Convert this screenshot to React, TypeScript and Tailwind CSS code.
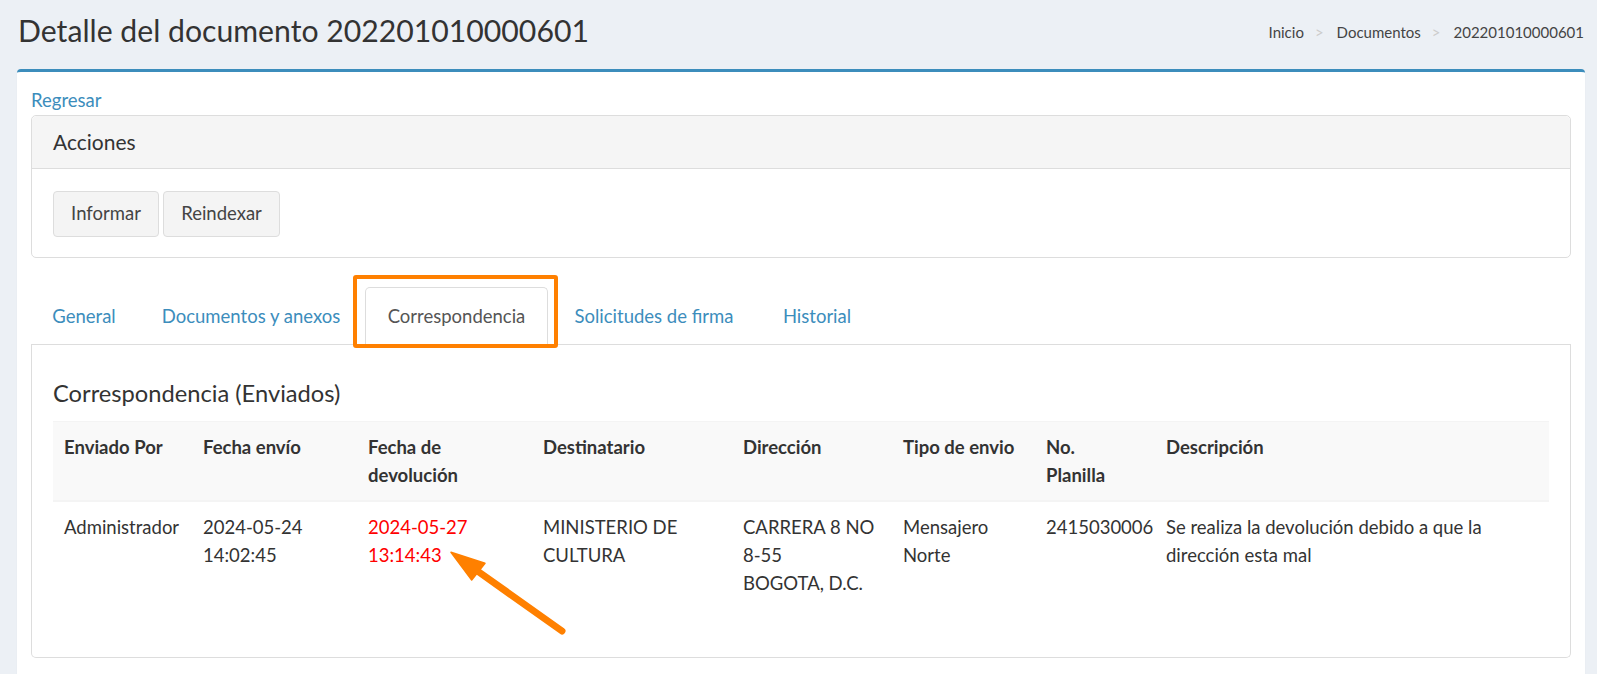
import React from "react";

const font = { fontFamily: "Lato, 'Noto Sans', sans-serif" };

export default function App() {
  const tabs = [
    { label: "General", w: "w-[106px]" },
    { label: "Documentos y anexos", w: "w-[222px]" },
    { label: "Correspondencia", w: "w-[183px]", active: true },
    { label: "Solicitudes de firma", w: "w-[206px]" },
    { label: "Historial", w: "w-[114px]" },
  ];
  return (
    <div className="relative min-h-[674px] bg-[#ecf0f5] text-[#333]" style={font}>
      {/* Header */}
      <div className="flex h-[69px] items-start justify-between pl-[18px] pr-[13px]">
        <h1 className="pt-[12px] text-[30.2px] font-normal leading-[37px] text-[#333]">
          Detalle del documento 202201010000601
        </h1>
        <div className="mt-[21px] flex text-[15px] leading-[23px] text-[#444]">
          <span>Inicio</span>
          <span className="ml-[11px] mr-[13px] text-[#ccc]">&gt;</span>
          <span>Documentos</span>
          <span className="ml-[11px] mr-[13px] text-[#ccc]">&gt;</span>
          <span>202201010000601</span>
        </div>
      </div>

      {/* Card */}
      <div className="ml-[17px] mr-[12px] rounded-[4px] border-t-[3px] border-[#3c8dbc] bg-white p-[14px] pb-[20px] shadow-[0_1px_1px_rgba(0,0,0,0.1)]">
        <a className="block text-[18.5px] leading-[28px] text-[#3c8dbc]">Regresar</a>

        {/* Acciones panel */}
        <div className="mb-[29px] mt-[1px] rounded-[5px] border border-[#ddd]">
          <div className="h-[53px] rounded-t-[5px] border-b border-[#ddd] bg-[#f5f5f5] px-[21px] text-[21px] leading-[52px] text-[#333]">
            Acciones
          </div>
          <div className="flex gap-[4px] px-[21px] pb-[20px] pt-[22px]">
            <button className="h-[46px] w-[106px] rounded-[4px] border border-[#ddd] bg-[#f4f4f4] text-[18.5px] text-[#444]">
              Informar
            </button>
            <button className="h-[46px] w-[117px] rounded-[4px] border border-[#ddd] bg-[#f4f4f4] text-[18.5px] text-[#444]">
              Reindexar
            </button>
          </div>
        </div>

        {/* Tabs */}
        <ul className="flex gap-[3px] border-b border-[#ddd]">
          {tabs.map((t) => (
            <li
              key={t.label}
              className={
                t.active
                  ? `relative -mb-px ${t.w} rounded-t-[5px] border border-[#ddd] border-b-white bg-white pb-[14px] pt-[14px] text-center text-[18.5px] leading-[28px] text-[#555]`
                  : `relative -mb-px ${t.w} border border-transparent pb-[14px] pt-[14px] text-center text-[18.5px] leading-[28px] text-[#3c8dbc]`
              }
            >
              {t.label}
              {t.active && (
                <span className="pointer-events-none absolute -bottom-[4px] -left-[13px] -right-[11px] -top-[13px] rounded-[3px] border-[4px] border-[#ff8000]" />
              )}
            </li>
          ))}
        </ul>

        {/* Tab content */}
        <div className="rounded-b-[5px] border-x border-b border-[#ddd] px-[21px] pb-[21px] pt-[34px]">
          <h4 className="mb-[14px] text-[23.7px] font-normal leading-[28px] text-[#333]">
            Correspondencia (Enviados)
          </h4>
          <table className="mb-[28px] w-full table-fixed border-collapse text-left text-[18.5px] leading-[28px]">
            <colgroup>
              <col className="w-[139px]" />
              <col className="w-[165px]" />
              <col className="w-[175px]" />
              <col className="w-[200px]" />
              <col className="w-[160px]" />
              <col className="w-[143px]" />
              <col className="w-[120px]" />
              <col />
            </colgroup>
            <thead>
              <tr className="border-b-2 border-t border-[#f4f4f4] bg-[#f9f9f9]">
                <th className="px-[11px] pb-[11px] pt-[11px] align-top font-bold">Enviado Por</th>
                <th className="px-[11px] pb-[11px] pt-[11px] align-top font-bold">Fecha envío</th>
                <th className="px-[11px] pb-[11px] pt-[11px] align-top font-bold">
                  Fecha de<br />devolución
                </th>
                <th className="px-[11px] pb-[11px] pt-[11px] align-top font-bold">Destinatario</th>
                <th className="px-[11px] pb-[11px] pt-[11px] align-top font-bold">Dirección</th>
                <th className="px-[11px] pb-[11px] pt-[11px] align-top font-bold">Tipo de envio</th>
                <th className="px-[11px] pb-[11px] pt-[11px] align-top font-bold">
                  No.<br />Planilla
                </th>
                <th className="px-[11px] pb-[11px] pt-[11px] align-top font-bold">Descripción</th>
              </tr>
            </thead>
            <tbody>
              <tr>
                <td className="px-[11px] py-[11px] align-top">Administrador</td>
                <td className="px-[11px] py-[11px] align-top">
                  2024-05-24<br />14:02:45
                </td>
                <td className="px-[11px] py-[11px] align-top text-[#ff0000]">
                  2024-05-27<br />13:14:43
                </td>
                <td className="px-[11px] py-[11px] align-top">
                  MINISTERIO DE<br />CULTURA
                </td>
                <td className="px-[11px] py-[11px] align-top">
                  CARRERA 8 NO<br />8-55<br />BOGOTA, D.C.
                </td>
                <td className="px-[11px] py-[11px] align-top">
                  Mensajero<br />Norte
                </td>
                <td className="px-[11px] py-[11px] align-top">2415030006</td>
                <td className="px-[11px] py-[11px] align-top">
                  Se realiza la devolución debido a que la<br />dirección esta mal
                </td>
              </tr>
            </tbody>
          </table>
        </div>
      </div>

      {/* Annotation arrow */}
      <svg
        className="pointer-events-none absolute left-[440px] top-[540px]"
        width="130"
        height="100"
        viewBox="0 0 130 100"
      >
        <line x1="36" y1="30" x2="122" y2="91" stroke="#ff8000" strokeWidth="7" strokeLinecap="round" />
        <polygon points="11,12.3 31.7,40 45,23.3" fill="#ff8000" stroke="#ff8000" strokeWidth="1.5" strokeLinejoin="round" />
      </svg>
    </div>
  );
}
